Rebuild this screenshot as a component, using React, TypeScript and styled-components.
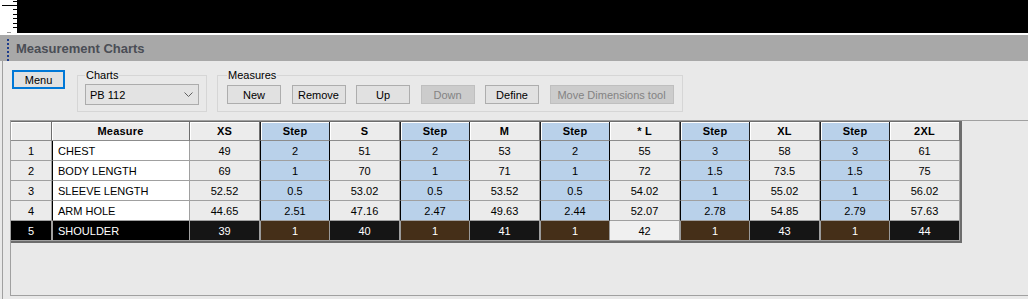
import styled, { createGlobalStyle, css } from 'styled-components';

const GlobalStyle = createGlobalStyle`
  html, body {
    margin: 0;
    padding: 0;
    background: #e9e9e9;
    overflow: hidden;
  }
  body {
    font-family: "Liberation Sans", Arial, sans-serif;
    font-size: 11px;
    color: #000;
  }
  * { box-sizing: border-box; }
`;

const Screen = styled.div`
  width: 1028px;
  height: 299px;
  display: flex;
  flex-direction: column;
  overflow: hidden;
`;

const TopStrip = styled.div`
  height: 33px;
  background: #000;
  display: flex;
  border-bottom: 2px solid #fff;
  box-sizing: content-box;
`;

const Ruler = styled.div`
  width: 17px;
  height: 33px;
  background: #fff;
`;

const TitleBar = styled.div`
  height: 26px;
  background: #a8a8a8;
  display: flex;
  align-items: center;
  padding-left: 7px;
  gap: 7px;
`;

const Grip = styled.div`
  width: 2px;
  height: 22px;
  margin-top: 4px;
  border-left: 2px dotted #1d3c8c;
`;

const Title = styled.h1`
  margin: 0;
  font-size: 13px;
  font-weight: 700;
  color: #4a4d55;
`;

const Body = styled.div`
  flex: 1;
  margin-left: 2px;
  border-left: 1px solid #a0a0a0;
  padding: 7px 0 3px 7px;
  display: flex;
  flex-direction: column;
  gap: 8px;
  min-height: 0;
`;

const Toolbar = styled.div`
  display: flex;
  align-items: flex-start;
  gap: 10px;
`;

const MenuButton = styled.button`
  width: 53px;
  height: 19px;
  margin: 2px 2px 0 2px;
  padding: 0;
  background: #e1e1e1;
  border: 2px solid #0078d7;
  font: 11px "Liberation Sans", Arial, sans-serif;
  color: #000;
`;

const Group = styled.fieldset<{ $pad: string }>`
  margin: 0;
  padding: ${(p) => p.$pad};
  border: 1px solid #d6d6d6;
  min-width: 0;
`;

const Legend = styled.legend`
  padding: 0 1px;
  font-size: 11px;
  line-height: 14px;
  color: #000;
`;

const Combo = styled.div`
  width: 114px;
  height: 21px;
  background: #e3e3e3;
  border: 1px solid #acacac;
  display: flex;
  align-items: center;
  justify-content: space-between;
  padding: 0 5px 0 4px;
  font-size: 11px;
`;

const ButtonRow = styled.div`
  display: flex;
  gap: 10.5px;
`;

const ToolButton = styled.button<{ $w?: number }>`
  width: ${(p) => p.$w ?? 54}px;
  height: 19px;
  padding: 0;
  background: #e1e1e1;
  border: 1px solid #adadad;
  font: 11px "Liberation Sans", Arial, sans-serif;
  color: #000;
  white-space: nowrap;
  &:disabled {
    background: #cccccc;
    border-color: #bfbfbf;
    color: #838383;
  }
`;

const GridBox = styled.div`
  flex: 1;
  border: 1px solid #a0a0a0;
  border-right: none;
  background: #e9e9e9;
  display: flex;
  align-items: flex-start;
`;

const Sheet = styled.div`
  display: grid;
  grid-template-columns: 41px 138px repeat(11, 70px);
  grid-template-rows: 19px;
  grid-auto-rows: 20px;
  border-top: 1px solid #6d6d6d;
  border-right: 2px solid #6d6d6d;
  border-bottom: 2px solid #6d6d6d;
`;

type Kind = 'num' | 'name' | 'size' | 'step';

const HeadCell = styled.div<{ $kind: Kind }>`
  display: flex;
  align-items: center;
  justify-content: center;
  font-weight: 700;
  font-size: 11px;
  letter-spacing: 0.2px;
  background: ${(p) => (p.$kind === 'step' ? '#b9d1ea' : '#ececec')};
  border-right: 1px solid #6d6d6d;
  border-bottom: 1px solid #8c8c8c;
  box-shadow: inset 1px 1px 0 #fff;
  ${(p) =>
    p.$kind === 'step' &&
    css`
      border-left: 1px solid #202020;
      border-right: 1px solid #202020;
    `}
`;

const cellBg = (kind: Kind, selected: boolean, base: boolean) => {
  if (selected) {
    if (kind === 'step') return '#452f18';
    if (kind === 'size') return base ? '#f0f0f0' : '#151515';
    return '#000';
  }
  if (kind === 'step') return '#b9d1ea';
  if (kind === 'name') return '#fff';
  return '#ebebeb';
};

const Cell = styled.div<{ $kind: Kind; $selected?: boolean; $base?: boolean }>`
  display: flex;
  align-items: center;
  justify-content: ${(p) => (p.$kind === 'name' ? 'flex-start' : 'center')};
  padding-left: ${(p) => (p.$kind === 'name' ? '5px' : '0')};
  font-family: ${(p) =>
    p.$kind === 'name'
      ? '"Liberation Sans Narrow", "Liberation Sans", Arial, sans-serif'
      : '"Liberation Sans", Arial, sans-serif'};
  font-size: 11px;
  background: ${(p) => cellBg(p.$kind, !!p.$selected, !!p.$base)};
  color: ${(p) => (p.$selected && !p.$base ? '#fff' : '#000')};
  border-right: 1px solid #a0a0a0;
  border-bottom: 1px solid #a0a0a0;
  ${(p) =>
    p.$kind === 'name' &&
    css`
      border-left: 1px solid ${p.$selected ? '#a0a0a0' : '#000'};
    `}
  ${(p) =>
    p.$kind === 'step' &&
    css`
      border-left: 1px solid ${p.$selected ? '#9a9a9a' : '#000'};
      border-right: 1px solid ${p.$selected ? '#9a9a9a' : '#000'};
    `}
`;

const headers = ['XS', 'Step', 'S', 'Step', 'M', 'Step', '* L', 'Step', 'XL', 'Step', '2XL'];
const BASE_COL = 6;

const rows: { name: string; values: string[] }[] = [
  { name: 'CHEST', values: ['49', '2', '51', '2', '53', '2', '55', '3', '58', '3', '61'] },
  { name: 'BODY LENGTH', values: ['69', '1', '70', '1', '71', '1', '72', '1.5', '73.5', '1.5', '75'] },
  {
    name: 'SLEEVE LENGTH',
    values: ['52.52', '0.5', '53.02', '0.5', '53.52', '0.5', '54.02', '1', '55.02', '1', '56.02'],
  },
  {
    name: 'ARM HOLE',
    values: ['44.65', '2.51', '47.16', '2.47', '49.63', '2.44', '52.07', '2.78', '54.85', '2.79', '57.63'],
  },
  { name: 'SHOULDER', values: ['39', '1', '40', '1', '41', '1', '42', '1', '43', '1', '44'] },
];
const SELECTED_ROW = 4;

const RulerMarks = () => (
  <svg width="17" height="33" viewBox="0 0 17 33">
    <line x1="2" y1="5.5" x2="17" y2="5.5" stroke="#000" />
    {[1, 9, 14, 18, 23, 27].map((y) => (
      <line key={y} x1="13" y1={y + 0.5} x2="17" y2={y + 0.5} stroke="#000" />
    ))}
    <line x1="7" y1="32.5" x2="11" y2="32.5" stroke="#999" />
  </svg>
);

const Chevron = () => (
  <svg width="9" height="6" viewBox="0 0 9 6">
    <polyline points="0.5,0.5 4.5,4.5 8.5,0.5" fill="none" stroke="#606060" strokeWidth="1" />
  </svg>
);

const App = () => {
  return (
    <Screen>
      <GlobalStyle />
      <TopStrip>
        <Ruler>
          <RulerMarks />
        </Ruler>
      </TopStrip>
      <TitleBar>
        <Grip />
        <Title>Measurement Charts</Title>
      </TitleBar>
      <Body>
        <Toolbar>
          <MenuButton>Menu</MenuButton>
          <Group $pad="2px 7px 6px 7px">
            <Legend>Charts</Legend>
            <Combo>
              <span>PB 112</span>
              <Chevron />
            </Combo>
          </Group>
          <Group $pad="3px 8px 7px 9px">
            <Legend>Measures</Legend>
            <ButtonRow>
              <ToolButton>New</ToolButton>
              <ToolButton>Remove</ToolButton>
              <ToolButton>Up</ToolButton>
              <ToolButton disabled>Down</ToolButton>
              <ToolButton>Define</ToolButton>
              <ToolButton disabled $w={124}>
                Move Dimensions tool
              </ToolButton>
            </ButtonRow>
          </Group>
        </Toolbar>
        <GridBox>
          <Sheet>
            <HeadCell $kind="num" />
            <HeadCell $kind="name">Measure</HeadCell>
            {headers.map((h, i) => (
              <HeadCell key={i} $kind={h === 'Step' ? 'step' : 'size'}>
                {h}
              </HeadCell>
            ))}
            {rows.map((row, r) => {
              const selected = r === SELECTED_ROW;
              return [
                <Cell key={`n${r}`} $kind="num" $selected={selected}>
                  {r + 1}
                </Cell>,
                <Cell key={`m${r}`} $kind="name" $selected={selected}>
                  {row.name}
                </Cell>,
                ...row.values.map((v, c) => (
                  <Cell
                    key={`${r}-${c}`}
                    $kind={c % 2 === 1 ? 'step' : 'size'}
                    $selected={selected}
                    $base={c === BASE_COL}
                  >
                    {v}
                  </Cell>
                )),
              ];
            })}
          </Sheet>
        </GridBox>
      </Body>
    </Screen>
  );
};

export default App;
